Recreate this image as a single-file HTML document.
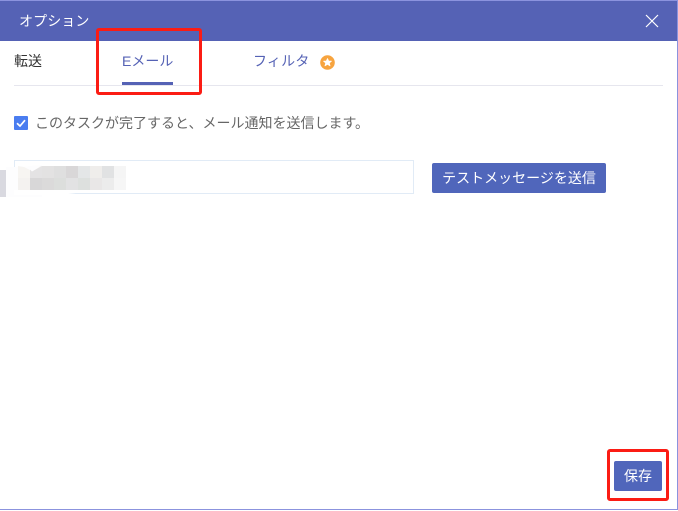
<!DOCTYPE html>
<html lang="ja">
<head>
<meta charset="utf-8">
<title>オプション</title>
<style>
html,body{margin:0;padding:0;background:#fff}
body{width:678px;height:511px;position:relative;overflow:hidden;font-family:"Liberation Sans","Noto Sans CJK JP",sans-serif}
.a{position:absolute;white-space:nowrap;box-sizing:border-box}
.c{position:absolute;width:12px;height:12px}
</style>
</head>
<body>
<div class="a" style="left:0;top:0;width:678px;height:41px;background:#5562b5"></div>
<div class="a" style="left:0;top:0;width:678px;height:1px;background:#8b93de"></div>
<div class="a" style="left:677px;top:0;width:1px;height:510px;background:#8b93de"></div>
<div class="a" style="left:0;top:509px;width:678px;height:1px;background:#8b93de"></div>

<div class="a" style="left:19px;top:12px;font-size:14px;line-height:18px;color:#fff;letter-spacing:.1px">オプション</div>
<svg class="a" style="left:645px;top:14px" width="14" height="14" viewBox="0 0 14 14"><path d="M1 1L13 13M13 1L1 13" stroke="#fff" stroke-width="1.2" fill="none"/></svg>

<div class="a" style="left:14px;top:52px;font-size:14px;line-height:18px;color:#333">転送</div>
<div class="a" style="left:122px;top:52px;font-size:14px;line-height:18px;color:#5562b5">Eメール</div>
<div class="a" style="left:122px;top:82px;width:51px;height:3px;background:#5562b5"></div>
<div class="a" style="left:253px;top:52px;font-size:14px;line-height:18px;color:#5562b5;letter-spacing:.2px">フィルタ</div>
<svg class="a" style="left:319.5px;top:54.5px" width="15" height="15" viewBox="0 0 15 15"><circle cx="7.5" cy="7.5" r="7.3" fill="#f7a43f"/><path d="M7.5 3.6L8.7 6.2H11.4L9.3 8L10 10.8L7.5 9.3L5 10.8L5.7 8L3.6 6.2H6.3Z" fill="#fff" stroke="#fff" stroke-width=".8" stroke-linejoin="round"/></svg>
<div class="a" style="left:14px;top:85px;width:649px;height:1px;background:#e6e6ee"></div>

<div class="a" style="left:14px;top:116px;width:14px;height:14px;background:#4a7df0;border-radius:1px"></div>
<svg class="a" style="left:14px;top:116px" width="14" height="14" viewBox="0 0 14 14"><path d="M3 7.2L6 10L11 4.2" stroke="#fff" stroke-width="1.7" fill="none"/></svg>
<div class="a" style="left:35px;top:114px;font-size:14px;line-height:18px;color:#666">このタスクが完了すると、メール通知を送信します。</div>

<div class="a" style="left:14px;top:160px;width:400px;height:34px;border:1px solid #e1ebf6;background:#fff"></div>
<svg class="a" style="left:0;top:160px" width="100" height="40" viewBox="0 0 100 40"><path d="M6 7H18L42 5V37H6Z" fill="#fdfdfe"/><path d="M14 30H60L76 33L60 35H14Z" fill="#fff"/></svg>
<div class="a" style="left:0;top:170px;width:6px;height:27px;background:#d9d9e0"></div>
<svg class="a" style="left:18px;top:166px" width="24" height="12" viewBox="0 0 24 12"><path d="M0 0L6 1L12 4L14 6L24 -1V12H0Z" fill="#f7f5f2"/><path d="M12 12V3.6L14 5.5L24 0V12Z" fill="#e4e3e4"/></svg>
<div class="c" style="left:42px;top:166px;background:#e3e2e2"></div>
<div class="c" style="left:54px;top:166px;background:#dfdfdf"></div>
<div class="c" style="left:66px;top:166px;background:#d9d7d8"></div>
<div class="c" style="left:78px;top:166px;background:#e4e6e7"></div>
<div class="c" style="left:90px;top:166px;background:#efedeb"></div>
<div class="c" style="left:102px;top:166px;background:#e1e2e3"></div>
<div class="c" style="left:114px;top:166px;background:#f5f5f5"></div>
<div class="c" style="left:18px;top:178px;background:#f4f2f0"></div>
<div class="c" style="left:30px;top:178px;background:#d8d7d8"></div>
<div class="c" style="left:42px;top:178px;background:#dbdada"></div>
<div class="c" style="left:54px;top:178px;background:#dcdedc"></div>
<div class="c" style="left:66px;top:178px;background:#e2e2e3"></div>
<div class="c" style="left:78px;top:178px;background:#dde0de"></div>
<div class="c" style="left:90px;top:178px;background:#e9e7e7"></div>
<div class="c" style="left:102px;top:178px;background:#ececec"></div>
<div class="c" style="left:114px;top:178px;background:#f6f6f6"></div>

<div class="a" style="left:432px;top:163px;width:174px;height:30px;background:#5066bb;border-radius:2px;color:#fff;font-size:14px;line-height:30px;text-align:center">テストメッセージを送信</div>

<div class="a" style="left:614px;top:461px;width:48px;height:30px;background:#5066bb;border-radius:2px;color:#fff;font-size:14px;line-height:30px;text-align:center">保存</div>

<div class="a" style="left:96px;top:28px;width:106px;height:67px;border:3px solid #fb1c14;border-radius:3px"></div>
<div class="a" style="left:607px;top:449px;width:62px;height:52px;border:3px solid #fb1c14;border-radius:3px"></div>
</body>
</html>
